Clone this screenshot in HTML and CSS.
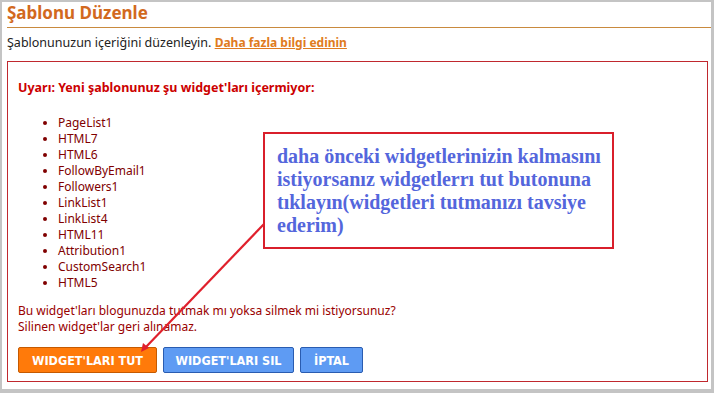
FILE: index.html
```html
<!DOCTYPE html>
<html lang="tr">
<head>
    <meta charset="UTF-8">
    <title>Şablonu Düzenle</title>
    <link rel="stylesheet" href="styles.css">
</head>
<body>
    <div class="page">
        <h1 class="title">Şablonu Düzenle</h1>
        <p class="intro">Şablonunuzun içeriğini düzenleyin. <a href="#" class="more">Daha fazla bilgi edinin</a></p>

        <div class="warning-box">
            <p class="warning-title">Uyarı: Yeni şablonunuz şu widget'ları içermiyor:</p>
            <ul class="widget-list">
                <li>PageList1</li>
                <li>HTML7</li>
                <li>HTML6</li>
                <li>FollowByEmail1</li>
                <li>Followers1</li>
                <li>LinkList1</li>
                <li>LinkList4</li>
                <li>HTML11</li>
                <li>Attribution1</li>
                <li>CustomSearch1</li>
                <li>HTML5</li>
            </ul>
            <p class="question">Bu widget'ları blogunuzda tutmak mı yoksa silmek mi istiyorsunuz?<br>Silinen widget'lar geri alınamaz.</p>
            <div class="actions">
                <button class="btn btn-keep">WIDGET'LARI TUT</button>
                <button class="btn btn-blue">WIDGET'LARI SIL</button>
                <button class="btn btn-blue btn-cancel">İPTAL</button>
            </div>
        </div>

        <!-- açıklama notu ve ok -->
        <div class="note">daha önceki widgetlerinizin kalmasını istiyorsanız widgetlerrı tut butonuna tıklayın(widgetleri tutmanızı tavsiye ederim)</div>
        <svg class="arrow" width="714" height="393" viewBox="0 0 714 393">
            <line x1="264" y1="224" x2="145" y2="348" stroke="#e0202c" stroke-width="2.2"/>
            <polygon points="141,352 143,343 149,348" fill="#e0202c"/>
        </svg>
    </div>
</body>
</html>
```

FILE: styles.css
```css
html, body {
    margin: 0;
    padding: 0;
    background: #ffffff;
}

.page {
    position: relative;
    width: 714px;
    height: 393px;
    box-sizing: border-box;
    border: 2px solid #c4c4c4;
    border-bottom-width: 4px;
    border-right-width: 3px;
    font-family: "Noto Sans", sans-serif;
    overflow: hidden;
}

.title {
    margin: 0 0 0 5px;
    padding: 0 0 3px 0;
    font-size: 17px;
    font-weight: bold;
    color: #d2691e;
    border-bottom: 1px solid #c98a3e;
    line-height: 22px;
}

.intro {
    margin: 7px 0 0 5px;
    font-size: 12.5px;
    color: #222222;
    line-height: 16px;
}

.more {
    color: #e07b20;
    font-size: 12px;
    font-weight: bold;
    text-decoration: underline;
}

.warning-box {
    margin: 10px 3px 0 5px;
    height: 321px;
    box-sizing: border-box;
    border: 1px solid #c0282e;
    padding: 18px 10px 0 10px;
    font-size: 12px;
}

.warning-title {
    margin: 0;
    color: #cc0000;
    font-size: 12.5px;
    font-weight: bold;
    line-height: 16px;
}

.widget-list {
    margin: 19px 0 0 0;
    padding-left: 40px;
    color: #800000;
    line-height: 16px;
}

.question {
    margin: 12px 0 0 0;
    color: #990000;
    line-height: 16px;
}

.actions {
    display: flex;
    gap: 6px;
    margin-top: 12px;
}

.btn {
    height: 26px;
    box-sizing: border-box;
    border-radius: 2px;
    font-family: "DejaVu Sans Condensed", "DejaVu Sans", sans-serif;
    font-size: 12.5px;
    font-weight: bold;
    color: #ffffff;
    padding: 0 4px;
    cursor: pointer;
}

.btn-keep {
    width: 139px;
    background: #ff7a0a;
    border: 1px solid #c55a00;
}

.btn-blue {
    width: 131px;
    background: #5e9bf3;
    border: 1px solid #2a5cb0;
}

.btn-cancel {
    width: 63px;
}

.note {
    position: absolute;
    left: 261px;
    top: 130px;
    width: 351px;
    height: 117px;
    box-sizing: border-box;
    border: 2px solid #d91f2b;
    padding: 11px 6px 0 12px;
    font-family: "Liberation Serif", serif;
    font-size: 20px;
    font-weight: bold;
    line-height: 23px;
    color: #5466dc;
    background: #ffffff;
}

.arrow {
    position: absolute;
    left: -2px;
    top: -2px;
    pointer-events: none;
}
```
